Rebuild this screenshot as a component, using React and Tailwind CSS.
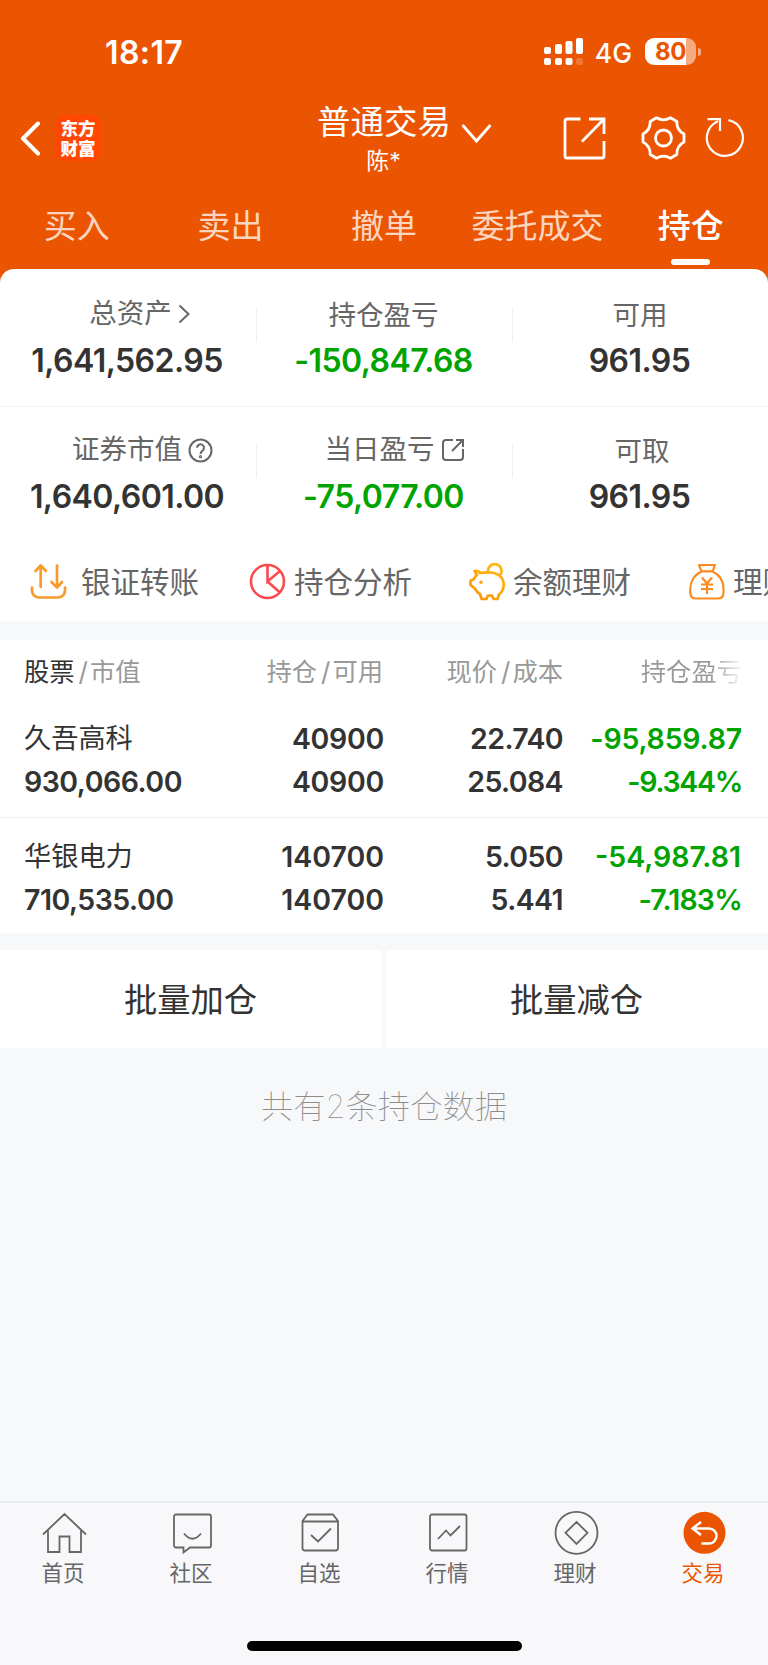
import React from 'react'

const tabs = ['买入', '卖出', '撤单', '委托成交', '持仓']

const holdings = [
  { name: '久吾高科', value: '930,066.00', qty: '40900', avail: '40900', price: '22.740', cost: '25.084', pl: '-95,859.87', pct: '-9.344%' },
  { name: '华银电力', value: '710,535.00', qty: '140700', avail: '140700', price: '5.050', cost: '5.441', pl: '-54,987.81', pct: '-7.183%' },
]

function StatusBar() {
  return (
    <div className="flex h-[98px] items-start pt-[34px] pl-[105px] pr-[67px]">
      <div className="text-[32px] leading-[37px] font-semibold tracking-[0.4px]">18:17</div>
      <svg className="ml-auto mt-1" width="39" height="27" viewBox="0 0 39 27" fill="#fff">
        <rect x="0" y="9" width="7" height="7" rx="2" />
        <rect x="11" y="6" width="7" height="10" rx="2" />
        <rect x="21.500" y="3" width="7" height="13" rx="2" />
        <rect x="32" y="0" width="7" height="16" rx="2" />
        <rect x="0" y="20" width="7" height="7" rx="2" />
        <rect x="11" y="20" width="7" height="7" rx="2" />
        <rect x="21.500" y="20" width="7" height="7" rx="2" />
        <rect x="32" y="20" width="7" height="7" rx="2" opacity=".2" />
      </svg>
      <div className="ml-3 text-[26.5px] leading-[38px] font-medium">4G</div>
      <div className="ml-[13px] mt-1 flex items-center gap-[2px]">
        <div className="flex h-[27px] w-[51px] items-center justify-center rounded-[9px] bg-linear-to-r from-white from-80% to-[#f6aa80] to-80% text-[24px] font-bold tracking-[-0.5px] text-[#eb5502]">80</div>
        <div className="h-2 w-[3px] rounded-r-full bg-[#f6aa80]" />
      </div>
    </div>
  )
}

function TitleBar() {
  return (
    <div className="grid h-[88px] grid-cols-[1fr_auto_1fr]">
      <div className="flex pl-5 pt-[17px]">
        <svg className="mt-[6px]" width="22" height="35" viewBox="0 0 22 35" fill="none" stroke="#fff" strokeWidth="4" strokeLinecap="round" strokeLinejoin="round">
          <path d="M18 2.500 3 17.500 18 32.500" />
        </svg>
        <div className="ml-[13px] h-[46px] w-[46px] rounded-[9px] bg-[#ff4603] pt-[4px] text-center text-[17.5px] leading-[19.5px] font-black">
          <div>东方</div>
          <div>财富</div>
        </div>
      </div>
      <div className="text-center">
        <div className="h-[49px] text-[33.5px] leading-[49px]">普通交易</div>
        <div className="pr-[1px] text-[23px] leading-[28px]">陈*</div>
      </div>
      <div className="flex">
        <svg className="ml-[10px] mt-[26px]" width="32" height="22" viewBox="0 0 32 22" fill="none" stroke="#fff" strokeWidth="2.800">
          <path d="M1.500 1 15.500 17 29.500 1" />
        </svg>
        <svg className="ml-[70px] mt-[19px]" width="43" height="43" viewBox="0 0 43 43" fill="none" stroke="#fff" strokeWidth="2.800">
          <path d="M17.500 2H4a2 2 0 0 0-2 2v35a2 2 0 0 0 2 2h35a2 2 0 0 0 2-2V24M26 2H41v15M40.500 2.500 19 24.500" />
        </svg>
        <svg className="ml-[35px] mt-[18px]" width="45" height="44" viewBox="0 0 45 44" fill="none" stroke="#fff" strokeWidth="2.800" strokeLinejoin="round">
          <path d="M15.500 1.800Q22.500 5.800 29.500 1.800L35.800 5.500Q35.500 14 43 18V26Q35.500 30 35.800 38.500L29.500 42.200Q22.500 38.200 15.500 42.200L9.200 38.500Q9.500 30 2 26V18Q9.500 14 9.200 5.500Z" />
          <circle cx="22.500" cy="22" r="8" />
        </svg>
        <svg className="ml-[18px] mt-[19px]" width="42" height="42" viewBox="0 0 42 42" fill="none" stroke="#fff" strokeWidth="2.200">
          <path d="M24.500 3.200A18 18 0 1 1 14 4.200M3.500 2.200H16V14" />
        </svg>
      </div>
    </div>
  )
}

function Tabs() {
  return (
    <div className="grid h-[83px] grid-cols-5 text-center text-[33px]">
      {tabs.map(t => (
        <div key={t} className={t === '持仓' ? '-ml-[1px] font-medium' : 'text-[#fbd5c0]'}>
          <div className="h-[73px] leading-[80px]">{t}</div>
          {t === '持仓' && <div className="mx-auto h-[6px] w-[39px] rounded-full bg-white" />}
        </div>
      ))}
    </div>
  )
}

function Stat({ label, icon, value, green, labelClass }) {
  return (
    <div className="text-center">
      <div className={`flex h-[46px] items-center justify-center text-[27.5px] text-[#666] ${labelClass || ''}`}>
        {label}
        {icon}
      </div>
      <div className={green ? 'pr-[2px] text-[32px] leading-[48px] font-semibold tracking-[-0.55px] text-[#00a300]' : 'pr-[2px] text-[32px] leading-[48px] font-semibold tracking-[-0.55px] text-[#333]'}>{value}</div>
    </div>
  )
}

function Divider() {
  return <div className="mt-[17px] h-[34px] bg-[#f0f0f0]" />
}

function Summary() {
  return (
    <div>
      <div className="grid h-[138px] grid-cols-[256px_1px_255px_1px_255px] border-b border-[#f3f3f3] pt-[22px]">
        <Stat
          label="总资产"
          value="1,641,562.95"
          labelClass="pl-[23px]"
          icon={<svg className="ml-[6px]" width="12" height="20" viewBox="0 0 12 20" fill="none" stroke="#666" strokeWidth="2"><path d="M1.500 1.500 10.500 10 1.500 18.500" /></svg>}
        />
        <Divider />
        <Stat label="持仓盈亏" value="-150,847.68" green labelClass="pt-[4px] pr-[2px]" />
        <Divider />
        <Stat label="可用" value="961.95" labelClass="pt-[4px] pr-[1px]" />
      </div>
      <div className="grid h-[135px] grid-cols-[256px_1px_255px_1px_255px] pt-[20px]">
        <Stat
          label="证券市值"
          value="1,640,601.00"
          labelClass="pl-[29px]"
          icon={(
            <svg className="ml-[6px]" width="25" height="25" viewBox="0 0 25 25" fill="none" stroke="#666" strokeWidth="2">
              <circle cx="12.500" cy="12.500" r="11" />
              <path d="M9 9.800a3.500 3.500 0 1 1 5.300 3c-1.300.8-1.800 1.400-1.800 3.200" />
              <circle cx="12.500" cy="18.700" r=".6" />
            </svg>
          )}
        />
        <Divider />
        <Stat
          label="当日盈亏"
          value="-75,077.00"
          green
          labelClass="pl-[20px]"
          icon={(
            <svg className="ml-[6px]" width="24" height="24" viewBox="0 0 24 24" fill="none" stroke="#666" strokeWidth="2">
              <path d="M12 2H5a3 3 0 0 0-3 3v14a3 3 0 0 0 3 3h14a3 3 0 0 0 3-3v-8M15 2h7v7M22 2 11 13" />
            </svg>
          )}
        />
        <Divider />
        <Stat label="可取" value="961.95" labelClass="pl-[3px] pt-[4px]" />
      </div>
    </div>
  )
}

function QuickLinks() {
  return (
    <div className="flex h-[79px] items-center overflow-hidden whitespace-nowrap text-[29.5px] leading-[44px] text-[#666]">
      <div className="flex w-[219px] shrink-0 items-center pl-[30px]">
        <svg className="mr-[14px] shrink-0" width="37" height="37" viewBox="0 0 37 37" fill="none" stroke="#f79b2c" strokeWidth="2.700" strokeLinecap="round" strokeLinejoin="round">
          <path d="M10.700 24V2.500M5.500 8 10.700 2.500 16 8M27 2.500V24M21.500 19 27 24.500 32 19M2 24.500v3a7 7 0 0 0 7 7h19a7 7 0 0 0 7-7v-3" />
        </svg>
        <span>银证转账</span>
      </div>
      <div className="flex w-[219px] shrink-0 items-center pl-[30px]">
        <svg className="mr-[8px] shrink-0" width="37" height="37" viewBox="0 0 37 37" fill="none" stroke="#fb4a4f" strokeWidth="2.600">
          <circle cx="18.500" cy="18.500" r="16.500" />
          <path d="M18.500 2V18.500L31 8M18.500 18.500 31 29.500" />
        </svg>
        <span>持仓分析</span>
      </div>
      <div className="flex w-[219px] shrink-0 items-center pl-[30px]">
        <svg className="mr-[7px] shrink-0" width="38" height="38" viewBox="0 0 38 38" fill="none" stroke="url(#pig)" strokeWidth="2.700" strokeLinejoin="round">
          <defs>
            <linearGradient id="pig" gradientUnits="userSpaceOnUse" x1="30" y1="2" x2="8" y2="36">
              <stop stopColor="#fdb813" />
              <stop offset="1" stopColor="#fd9407" />
            </linearGradient>
          </defs>
          <path d="M6.500 8Q10.500 7.500 12 10Q14 9.300 17 9.700C28 8 35.700 13 35.700 21.500Q35.700 28 31 31.500L29.500 36H25.500L24 32.500H20L18.500 36H13.700L12 31C9 30 8 27 6.700 25.300L2.500 22V17.500Q6 17 6.700 14.300 8 12.500 9 12Z" />
          <path d="M20 8.800A6.800 6.800 0 1 1 31.500 12.800" />
          <circle cx="13" cy="19.300" r="1.700" fill="#fda60c" stroke="none" />
        </svg>
        <span>余额理财</span>
      </div>
      <div className="flex shrink-0 items-center pl-[32px]">
        <svg className="mr-[8px] shrink-0" width="36" height="38" viewBox="0 0 36 38" fill="none" stroke="#fb8b20" strokeWidth="2.200" strokeLinejoin="round">
          <path d="M10 2H26L23.500 8.300H12.500ZM12.500 8.500C5 12 1.300 19 1.300 26V29.500Q1.300 35.500 7 35.500H29Q34.500 35.500 34.500 29.500V26C34.500 19 31 12 23.500 8.500" />
          <path d="M13 14.500 18 20.500 23 14.500M18 20.500V31M12 21.500H24M12 26H24" />
        </svg>
        <span>理财</span>
      </div>
    </div>
  )
}

function Slash() {
  return <span className="pl-1 pr-[2px] text-[26px]">/</span>
}

function Holdings() {
  return (
    <div className="bg-white">
      <div className="grid h-[63px] grid-cols-[160px_200px_180px_178px] pl-6 text-right text-[25.3px] leading-[64px] text-[#999]">
        <div className="text-left"><span className="text-[#333]">股票</span><Slash />市值</div>
        <div className="pr-[1px]">持仓<Slash />可用</div>
        <div className="pr-[1px]">现价<Slash />成本</div>
        <div className="bg-linear-to-r from-[#999] from-82% to-white to-101% bg-clip-text text-transparent">持仓盈亏</div>
      </div>
      {holdings.map((h, i) => (
        <div key={h.name} className={i ? 'grid h-[116px] grid-cols-[160px_200px_180px_178px] border-t border-[#f0f0f0] pl-6 pt-[17px] text-right text-[28.5px] leading-[43px] font-semibold text-[#333]' : 'grid h-[114px] grid-cols-[160px_200px_180px_178px] pl-6 pt-[14px] text-right text-[28.5px] leading-[43px] font-semibold text-[#333]'}>
          <div className="text-left">
            <div className="text-[27.2px] font-normal">{h.name}</div>
            <div className="tracking-[-0.5px]">{h.value}</div>
          </div>
          <div className={h.qty.length > 5 ? '' : 'tracking-[-0.3px]'}>
            <div>{h.qty}</div>
            <div>{h.avail}</div>
          </div>
          <div className="pr-[1px] tracking-[-0.6px]">
            <div>{h.price}</div>
            <div>{h.cost}</div>
          </div>
          <div className="text-[#00a300]">
            <div className={i ? 'pr-[1px]' : 'tracking-[-0.2px]'}>{h.pl}</div>
            <div className={i ? 'tracking-[-0.8px]' : 'tracking-[-1.3px]'}>{h.pct}</div>
          </div>
        </div>
      ))}
    </div>
  )
}

const navItems = [
  { label: '首页', icon: <path d="M2 22.500 23.500 2 45 22.500M7 18.500V40H18.500V24.500H28.500V40H40V18.500" /> },
  { label: '社区', icon: <path d="M7 2.500H40a2 2 0 0 1 2 2V33.500a2 2 0 0 1-2 2H21L14.500 40.500V35.500H7a2 2 0 0 1-2-2V4.500a2 2 0 0 1 2-2ZM15 21.500Q23.500 32 32 21.500" /> },
  { label: '自选', icon: <path d="M5.500 9 10.500 2.500H36L41 9V36a2.500 2.500 0 0 1-2.500 2.500H8A2.500 2.500 0 0 1 5.500 36ZM5.500 9.500H41M14 23 21 29.500 34 16.500" /> },
  { label: '行情', icon: <path d="M7 2.500H39.500a2 2 0 0 1 2 2V36.500a2 2 0 0 1-2 2H7a2 2 0 0 1-2-2V4.500a2 2 0 0 1 2-2ZM13 27 21 18.500 25.500 23.500 35 14" /> },
  { label: '理财', icon: <><circle cx="23.500" cy="20.800" r="21" /><path d="M23.500 10 34.500 20.800 23.500 32 12.500 20.800Z" /></> },
  { label: '交易', icon: <><circle cx="23.500" cy="20.800" r="21" fill="#eb5502" stroke="none" /><path stroke="#fff" strokeWidth="2.400" d="M20 10 11.500 16.500 20 23M12 16.500H28a7.500 7.500 0 0 1 0 15H20.500" /></> },
]

function BottomNav() {
  return (
    <div className="h-[164px] border-t-2 border-[#e8edee] bg-[#f8f8fb]">
      <div className="grid h-[138px] grid-cols-6 pt-[9px] text-center text-[21.5px] text-[#666]">
        {navItems.map(n => (
          <div key={n.label} className={n.label === '交易' ? 'text-[#eb5502]' : ''}>
            <svg className="mx-auto overflow-visible" width="47" height="43" viewBox="0 0 47 43" fill="none" stroke="#666" strokeWidth="1.800">
              {n.icon}
            </svg>
            <div className="pr-[2px] leading-[37px]">{n.label}</div>
          </div>
        ))}
      </div>
      <div className="mx-auto h-[10px] w-[275px] rounded-full bg-black" />
    </div>
  )
}

export default function App() {
  return (
    <div className="flex h-[1665px] w-[768px] flex-col overflow-hidden bg-[#f7f8fa] font-['Inter','Noto_Sans_CJK_SC',sans-serif]">
      <div className="bg-[#eb5502] text-white">
        <StatusBar />
        <TitleBar />
        <Tabs />
        <div className="h-[352px] rounded-t-[14px] bg-white">
          <Summary />
          <QuickLinks />
        </div>
      </div>
      <div className="mt-[19px]">
        <Holdings />
      </div>
      <div className="mt-[17px] grid h-[98px] grid-cols-2 grid-rows-[98px] gap-1 text-center text-[33.3px] leading-[100px] text-[#333]">
        <div className="bg-white pr-[1px]">批量加仓</div>
        <div className="bg-white pr-[1px]">批量减仓</div>
      </div>
      <div className="mt-[30px] text-center text-[32.3px] leading-[57px] font-thin text-[#8c8c8c]">共有2条持仓数据</div>
      <div className="mt-auto">
        <BottomNav />
      </div>
    </div>
  )
}
